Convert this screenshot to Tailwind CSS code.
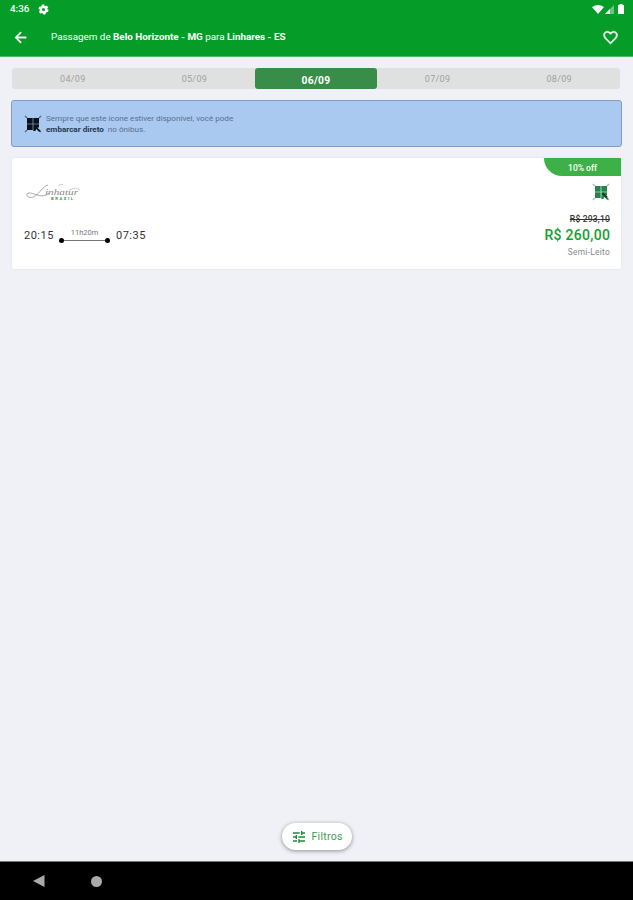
<!DOCTYPE html>
<html lang="pt-BR">
  <head>
    <meta charset="utf-8">
    <title>Passagem de Belo Horizonte - MG para Linhares - ES</title>
    <script src="https://cdn.jsdelivr.net/npm/@tailwindcss/browser@4"></script>
  </head>
  <body class="w-[633px] h-[900px] flex flex-col overflow-hidden bg-[#eff1f6] font-[Roboto,sans-serif] text-[#333]">
    <header class="h-[57px] shrink-0 bg-[#059d27] border-b border-[#4fb765] text-white">
      <div class="h-[18px] flex items-center pl-[10px] pr-[9px]">
        <span class="w-[28px] text-[9.8px] leading-none font-medium">4:36</span>
        <svg class="size-[11px]" viewBox="0 0 24 24" fill="none" stroke="currentColor"><circle cx="12" cy="12" r="6" stroke-width="5"/><circle cx="12" cy="12" r="9" stroke-width="4" stroke-dasharray="5.2 4.22"/></svg>
        <svg class="ml-auto w-[12px] h-[9px]" viewBox="0 0 24 18" fill="currentColor"><path d="M0 4Q12-4 24 4L12 18Z"/></svg>
        <svg class="ml-px w-[9px] h-[9px]" viewBox="0 0 18 18" fill="currentColor"><path opacity=".4" d="M18 0V18H0Z"/><path d="M10 8V18H0Z"/></svg>
        <svg class="ml-[4px] w-[6px] h-[10px]" viewBox="0 0 12 20" fill="currentColor"><path d="M3 0h6v2h3v18H0V2h3Z"/></svg>
      </div>
      <div class="h-[38px] flex items-center pl-[12px] pr-[14px]">
        <svg class="size-[17px]" viewBox="0 0 24 24" fill="currentColor" stroke="currentColor" stroke-width=".5"><path d="M20 11H7.83l5.59-5.59L12 4l-8 8 8 8 1.41-1.41L7.83 13H20z"/></svg>
        <h1 class="ml-[22px] text-[9.85px] leading-none whitespace-nowrap">Passagem de <b>Belo Horizonte - MG</b> para <b>Linhares - ES</b></h1>
        <svg class="ml-auto size-[17px]" viewBox="0 0 24 24" fill="currentColor" stroke="currentColor" stroke-width=".5"><path d="M16.5 3c-1.74 0-3.41.81-4.5 2.09C10.91 3.81 9.24 3 7.5 3 4.42 3 2 5.42 2 8.5c0 3.78 3.4 6.86 8.55 11.54L12 21.35l1.45-1.32C18.6 15.36 22 12.28 22 8.5 22 5.42 19.58 3 16.5 3zm-4.4 15.55l-.1.1-.1-.1C7.14 14.24 4 11.39 4 8.5 4 6.5 5.5 5 7.5 5c1.54 0 3.04.99 3.57 2.36h1.87C13.46 5.99 14.96 5 16.5 5c2 0 3.5 1.5 3.5 3.5 0 2.89-3.14 5.74-7.9 10.05z"/></svg>
      </div>
    </header>

    <main class="flex-1 flex flex-col px-[12px] pt-[11px]">
      <nav class="h-[21px] w-[608px] grid grid-cols-5 rounded-[3px] bg-[#e0e0e0] text-center text-[9px] leading-[23px] tracking-[.3px] text-[#a0a0a0]">
        <span>04/09</span>
        <span>05/09</span>
        <span class="h-[21px] rounded-[3px] bg-[#388e48] text-white text-[10.3px] leading-[25px] font-bold">06/09</span>
        <span>07/09</span>
        <span>08/09</span>
      </nav>

      <section class="mt-[11px] h-[47px] w-[611px] -ml-px flex items-center pl-[12px] rounded-[3px] border border-[#829cc5] bg-[#a9c9f0]">
        <svg class="size-[18px]" viewBox="0 0 18 18"><path d="M1 1l2 2M17 1l-2 2M1 17l2-2M15 15l2 2" fill="none" stroke="#53657e" stroke-width="1.2"/><path d="M3 3h5.700v5.700h-5.700zM9.300 3h5.700v5.700h-5.700zM3 9.300h5.700v5.700h-5.700zM9.300 9.300h5.700v3l-1.500 .5 3 3-1.200 1.200-3-3-1 2h-2z" fill="#08111d"/></svg>
        <p class="ml-[4px] text-[8.1px] leading-[11px] text-[#5a708e] whitespace-nowrap">Sempre que este ícone estiver disponível, você pode<br><b class="text-[#26384f]">embarcar direto</b>&nbsp; no ônibus.</p>
      </section>

      <article class="mt-[11px] h-[111px] w-[609px] flex justify-between rounded-[2px] bg-white shadow-[0_0_2px_#d9dce2]">
        <div class="pl-[12px] pt-[25px]">
          <svg class="ml-[2px] w-[55px] h-[20px] block" viewBox="0 0 55 20">
            <path d="M22 2C17 3 14 10 9 13C5 16 0 14 1 11C3 8 9 12 16 13Q20 13 23 10" fill="none" stroke="#888" stroke-width=".7"/>
            <text x="19" y="11.500" font-family="Liberation Serif, serif" font-style="italic" font-size="8" textLength="33" lengthAdjust="spacingAndGlyphs" fill="#888">inhatur</text>
            <path d="M32 3Q36 0 37 2M43 7Q50 4 54 7" fill="none" stroke="#999" stroke-width=".5"/>
            <text x="25" y="16.500" font-family="Roboto, sans-serif" font-weight="700" font-size="4" textLength="22" fill="#35924b">BRASIL</text>
          </svg>
          <div class="mt-[23px] h-[18px] flex items-center text-[11px] tracking-[.5px] leading-none">
            <time class="w-[35px]">20:15</time>
            <div class="w-[51px] mr-[6px] h-[18px] flex flex-col">
              <span class="h-[12px] pt-[3px] text-center text-[7.5px] leading-none tracking-normal text-[#777]">11h20m</span>
              <div class="flex items-center"><i class="size-[5px] rounded-full bg-black"></i><i class="h-px flex-1 bg-[#777]"></i><i class="size-[5px] rounded-full bg-black"></i></div>
            </div>
            <time>07:35</time>
          </div>
        </div>
        <div class="flex flex-col items-end">
          <span class="w-[77px] h-[18px] rounded-bl-[18px] bg-[#3eb048] text-center text-[8.5px] leading-[20px] font-medium text-white">10% off</span>
          <div class="pr-[11px] flex flex-col items-end">
            <svg class="mt-[7px] size-[18px]" viewBox="0 0 18 18"><path d="M1 1l2 2M17 1l-2 2M1 17l2-2M15 15l2 2" fill="none" stroke="#a9baa9" stroke-width="1.200"/><path d="M3 3h5.700v5.700h-5.700zM9.300 3h5.700v5.700h-5.700zM3 9.300h5.700v5.700h-5.700zM9.300 9.300h5.700v3l-1.500 .5 3 3-1.200 1.200-3-3-1 2h-2z" fill="#26834a"/><path d="M10.500 10l4.500 4.500" stroke="#123b20" stroke-width="1.800"/></svg>
            <s class="mt-[14px] text-[8.5px] leading-[9px] tracking-[.2px] font-medium text-[#333]">R$ 293,10</s>
            <strong class="mt-[3px] text-[14px] leading-[16px] font-medium tracking-[.3px] -mr-[.3px] text-[#12a02e]">R$ 260,00</strong>
            <span class="mt-[4px] text-[8.3px] leading-[10px] tracking-[.3px] text-[#888]">Semi-Leito</span>
          </div>
        </div>
      </article>

      <button class="mt-auto mb-[11px] self-center w-[70px] h-[27px] flex items-center pl-[9px] rounded-full bg-white text-[10.5px] tracking-[.3px] text-[#409b50] shadow-[0_1px_4px_#8b8f98]">
        <svg class="mr-[5px] size-[16px]" viewBox="0 0 24 24" fill="#168a37"><path d="M3 17v2h6v-2H3zM3 5v2h10V5H3zm10 16v-2h8v-2h-8v-2h-2v6h2zM7 9v2H3v2h4v2h2V9H7zm14 4v-2H11v2h10zm-6-4h2V7h4V5h-4V3h-2v6z"/></svg>
        Filtros
      </button>
    </main>

    <footer class="h-[39px] shrink-0 flex items-center pl-[33px] border-t border-[#777] bg-black text-[#aaa]">
      <svg class="w-[12px] h-[12px]" viewBox="0 0 12 12" fill="currentColor"><path d="M0 6L11.500 0V12Z"/></svg>
      <i class="ml-[46px] size-[11px] rounded-full bg-current"></i>
    </footer>
  </body>
</html>
